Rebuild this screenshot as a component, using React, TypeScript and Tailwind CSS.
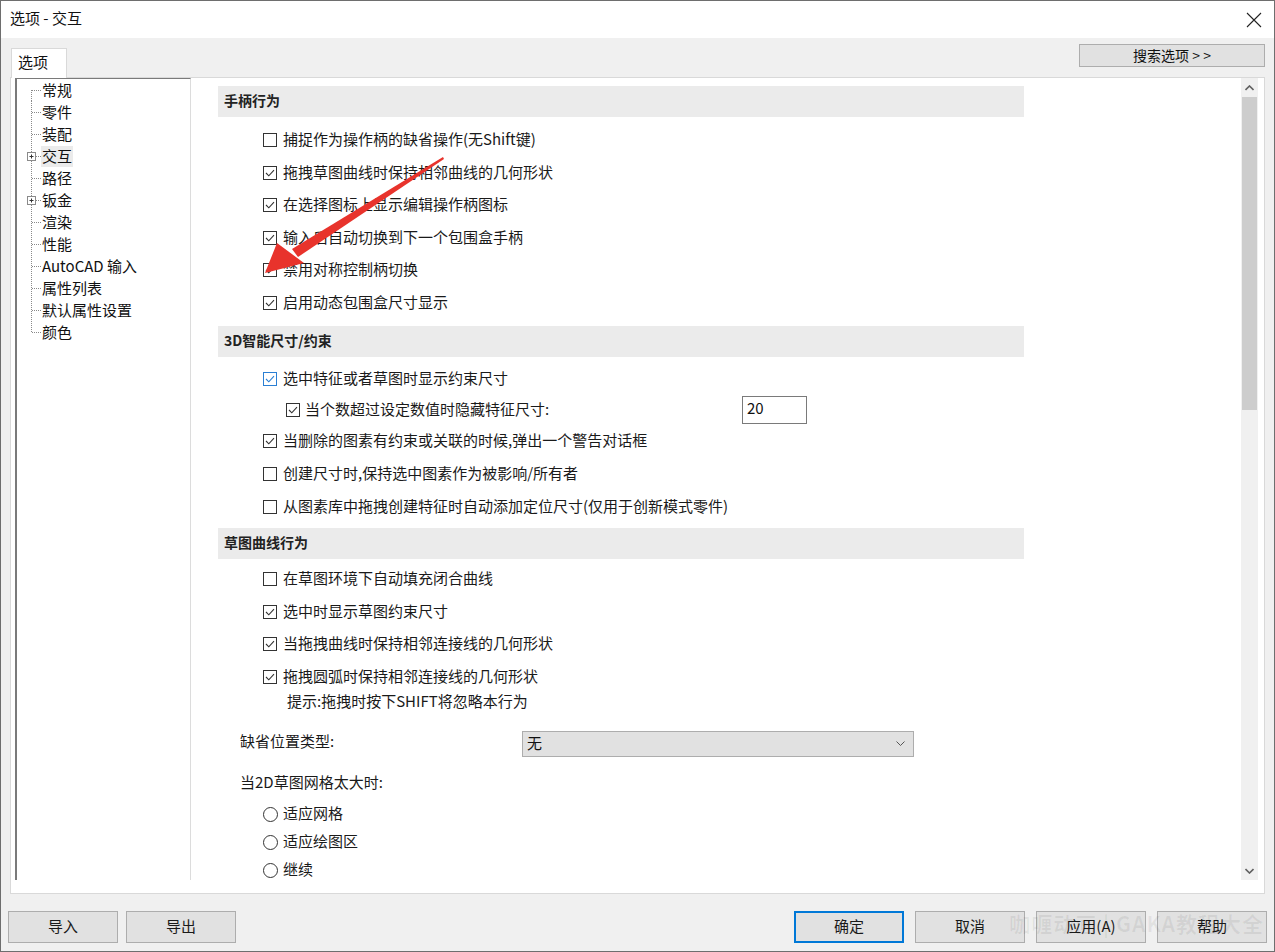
import React from 'react'

const font = { fontFamily: '"Noto Sans CJK SC", "Noto Sans", sans-serif' }

const Check = ({ checked, blue }: { checked?: boolean; blue?: boolean }) => (
  <span
    className={
      blue
        ? 'w-[14px] h-[14px] border border-[#2a7fd4] bg-white flex items-center justify-center shrink-0'
        : 'w-[14px] h-[14px] border border-[#333333] bg-white flex items-center justify-center shrink-0'
    }
  >
    {checked && (
      <svg width="10" height="8" viewBox="0 0 10 8">
        <path d="M1 4 L3.8 6.8 L9 1.2" fill="none" stroke={blue ? '#2a7fd4' : '#333333'} strokeWidth="1.1" />
      </svg>
    )}
  </span>
)

const Row = ({ checked, blue, label, h = 'h-[32.5px]' }: { checked?: boolean; blue?: boolean; label: string; h?: string }) => (
  <div className={`flex items-center gap-[6px] pl-[45px] ${h}`}>
    <Check checked={checked} blue={blue} />
    <span className="text-[15px] leading-none text-[#1a1a1a] whitespace-nowrap pb-[3px]">{label}</span>
  </div>
)

const Header = ({ title, className = '' }: { title: string; className?: string }) => (
  <div className={`h-[31px] w-[806px] bg-[#ebebeb] flex items-center pl-[6px] pb-[2px] text-[14px] font-bold text-[#222] ${className}`}>
    {title}
  </div>
)

const Radio = ({ label }: { label: string }) => (
  <div className="flex items-center gap-[5px] pl-[45px] h-[28px]">
    <span className="w-[15px] h-[15px] rounded-full border border-[#333333] bg-white shrink-0" />
    <span className="text-[15px] leading-none text-[#1a1a1a] pb-[3px]">{label}</span>
  </div>
)

const treeItems = [
  { label: '常规' },
  { label: '零件' },
  { label: '装配' },
  { label: '交互', plus: true, selected: true },
  { label: '路径' },
  { label: '钣金', plus: true },
  { label: '渲染' },
  { label: '性能' },
  { label: 'AutoCAD 输入' },
  { label: '属性列表' },
  { label: '默认属性设置' },
  { label: '颜色' },
]

const TreeLine = ({ first, last, plus }: { first?: boolean; last?: boolean; plus?: boolean }) => (
  <svg width="24" height="22" viewBox="0 0 24 22" className="shrink-0">
    <line x1="14.5" y1={first ? 11 : 0} x2="14.5" y2={last ? 11 : 22} stroke="#8a8a8a" strokeDasharray="1 1" />
    <line x1="15" y1="11.5" x2="24" y2="11.5" stroke="#8a8a8a" strokeDasharray="1 1" />
    {plus && (
      <g>
        <rect x="10.5" y="7.5" width="8" height="8" fill="white" stroke="#8a8a8a" />
        <line x1="12.5" y1="11.5" x2="16.5" y2="11.5" stroke="#333" />
        <line x1="14.5" y1="9.5" x2="14.5" y2="13.5" stroke="#333" />
      </g>
    )}
  </svg>
)

const Btn = ({ label, primary }: { label: string; primary?: boolean }) => (
  <div
    className={
      primary
        ? 'w-[110px] h-[32px] bg-[#e1e1e1] border-2 border-[#0078d7] flex items-center justify-center pb-[2px] text-[15px] text-[#1a1a1a]'
        : 'w-[110px] h-[32px] bg-[#e1e1e1] border border-[#adadad] flex items-center justify-center pb-[2px] text-[15px] text-[#1a1a1a]'
    }
  >
    {label}
  </div>
)

export default function App() {
  return (
    <div className="w-[1275px] h-[952px] border border-[#6e6e6e] bg-[#f0f0f0] flex flex-col overflow-hidden relative" style={font}>
      {/* title bar */}
      <div className="h-[37px] bg-white flex items-center justify-between pl-[9px] pr-[12px] shrink-0">
        <span className="text-[15px] text-[#111] pb-[2px]">选项 - 交互</span>
        <svg width="16" height="16" viewBox="0 0 16 16">
          <path d="M1 1 L15 15 M15 1 L1 15" stroke="#222" strokeWidth="1.1" />
        </svg>
      </div>

      {/* tabs row */}
      <div className="h-[39px] flex items-end justify-between shrink-0">
        <div className="ml-[10px] w-[56px] h-[30px] -mb-px bg-white border-t border-l border-r border-[#d9d9d9] flex items-center pl-[6px] pb-[3px] text-[15px] text-[#111] relative z-10">
          选项
        </div>
        <div className="self-start mt-[6px] mr-[9px] w-[186px] h-[23px] bg-[#e1e1e1] border border-[#adadad] flex items-center justify-center pb-[1px] text-[14px] text-[#111]">
          搜索选项 &gt; &gt;
        </div>
      </div>

      {/* panel */}
      <div className="mx-[9px] h-[817px] bg-white border border-[#d9d9d9] flex pl-[4px] pr-[6px] pb-[13px] shrink-0">
        {/* tree */}
        <div className="w-[176px] h-[802px] border-l-2 border-t border-[#7a7a7a] border-r border-r-[#dcdcdc] bg-white flex flex-col shrink-0">
          {treeItems.map((t, i) => (
            <div key={t.label} className="flex items-center h-[22px]">
              <TreeLine first={i === 0} last={i === treeItems.length - 1} plus={t.plus} />
              <span
                className={
                  t.selected
                    ? 'text-[15px] leading-none text-[#111] bg-[#ebebeb] px-[1px] pt-[2px] pb-[4px]'
                    : 'text-[15px] leading-none text-[#111] px-[1px] pt-[2px] pb-[4px]'
                }
              >
                {t.label}
              </span>
            </div>
          ))}
        </div>

        {/* content */}
        <div className="flex-1 h-[802px] flex ml-[1px] relative">
          <div className="flex-1 overflow-hidden pl-[26px] pt-[8px]">
            <Header title="手柄行为" />
            <div className="mt-[7px]">
              <Row label="捕捉作为操作柄的缺省操作(无Shift键)" />
              <Row checked label="拖拽草图曲线时保持相邻曲线的几何形状" />
              <Row checked label="在选择图标上显示编辑操作柄图标" />
              <Row checked label="输入后自动切换到下一个包围盒手柄" />
              <Row checked label="禁用对称控制柄切换" />
              <Row checked label="启用动态包围盒尺寸显示" />
            </div>

            <Header title="3D智能尺寸/约束" className="mt-[7px]" />
            <div className="mt-[6px]">
              <Row checked blue label="选中特征或者草图时显示约束尺寸" h="h-[32px]" />
              <div className="flex items-center h-[30px]">
                <div className="w-[524px] flex items-center gap-[5px] pl-[68px]">
                  <Check checked />
                  <span className="text-[15px] leading-none text-[#1a1a1a] pb-[3px]">当个数超过设定数值时隐藏特征尺寸:</span>
                </div>
                <div className="w-[65px] h-[28px] border border-[#7a7a7a] bg-white flex items-center pl-[4px] pb-[3px] text-[15px] text-[#111]">
                  20
                </div>
              </div>
              <Row checked label="当删除的图素有约束或关联的时候,弹出一个警告对话框" h="h-[32px]" />
              <Row label="创建尺寸时,保持选中图素作为被影响/所有者" h="h-[33px]" />
              <Row label="从图素库中拖拽创建特征时自动添加定位尺寸(仅用于创新模式零件)" h="h-[33px]" />
            </div>

            <Header title="草图曲线行为" className="mt-[5px]" />
            <div className="mt-[4px]">
              <Row label="在草图环境下自动填充闭合曲线" />
              <Row checked label="选中时显示草图约束尺寸" />
              <Row checked label="当拖拽曲线时保持相邻连接线的几何形状" />
              <Row checked label="拖拽圆弧时保持相邻连接线的几何形状" />
              <div className="h-[18px] flex items-center pl-[69px] pb-[3px] text-[15px] leading-none text-[#1a1a1a]">
                提示:拖拽时按下SHIFT将忽略本行为
              </div>
            </div>

            <div className="mt-[20px] flex items-center h-[26px]">
              <span className="w-[304px] pl-[22px] text-[15px] leading-none text-[#1a1a1a] mb-[8px]">缺省位置类型:</span>
              <div className="w-[392px] h-[26px] bg-[#e1e1e1] border border-[#adadad] flex items-center justify-between pl-[4px] pr-[8px] text-[15px] text-[#111]">
                <span className="pb-[2px]">无</span>
                <svg width="9" height="6" viewBox="0 0 9 6">
                  <path d="M0.5 0.5 L4.5 4.5 L8.5 0.5" fill="none" stroke="#555" strokeWidth="1" />
                </svg>
              </div>
            </div>

            <div className="mt-[16px] h-[20px] flex items-center pl-[22px] pb-[3px] text-[15px] leading-none text-[#1a1a1a]">
              当2D草图网格太大时:
            </div>
            <div className="mt-[7px]">
              <Radio label="适应网格" />
              <Radio label="适应绘图区" />
              <Radio label="继续" />
            </div>
          </div>

          {/* scrollbar */}
          <div className="w-[17px] bg-[#f0f0f0] flex flex-col items-center shrink-0">
            <div className="h-[19px] flex items-center justify-center">
              <svg width="9" height="6" viewBox="0 0 9 6">
                <path d="M0.5 5 L4.5 1 L8.5 5" fill="none" stroke="#606060" strokeWidth="1.6" />
              </svg>
            </div>
            <div className="w-[15px] h-[313px] bg-[#cdcdcd]" />
            <div className="flex-1" />
            <div className="h-[19px] flex items-center justify-center">
              <svg width="9" height="6" viewBox="0 0 9 6">
                <path d="M0.5 1 L4.5 5 L8.5 1" fill="none" stroke="#606060" strokeWidth="1.6" />
              </svg>
            </div>
          </div>
        </div>
      </div>

      {/* bottom buttons */}
      <div className="mt-[17px] flex items-center justify-between px-[7px] relative">
        <div className="flex gap-[8px]">
          <Btn label="导入" />
          <Btn label="导出" />
        </div>
        <div className="flex gap-[11px]">
          <Btn label="确定" primary />
          <Btn label="取消" />
          <Btn label="应用(A)" />
          <Btn label="帮助" />
        </div>
        <div className="absolute right-[10px] top-[-3px] text-[21px] text-black/[0.06] font-bold tracking-[1px] pointer-events-none whitespace-nowrap">
          咖喱动画 | GAKA教程大全
        </div>
      </div>

      {/* red annotation arrow */}
      <svg className="absolute left-0 top-0 pointer-events-none" width="1275" height="952">
        <polygon points="442,156 443,158 297,256 291,248" fill="#e8332c" />
        <polygon points="264,272 276,242 303,262" fill="#e8332c" />
      </svg>
    </div>
  )
}
